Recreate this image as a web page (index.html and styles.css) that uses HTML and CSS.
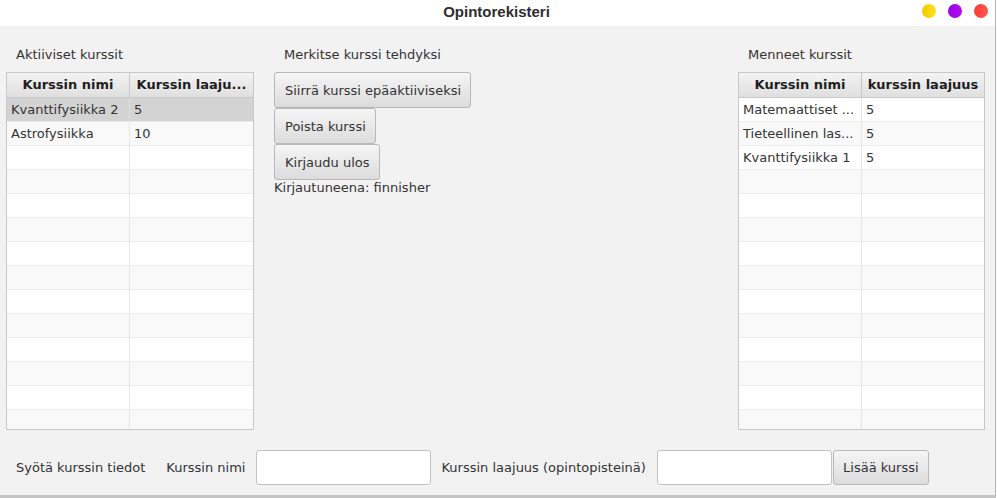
FILE: index.html
```html
<!DOCTYPE html>
<html lang="fi">
<head>
<meta charset="utf-8">
<title>Opintorekisteri</title>
<link rel="stylesheet" href="styles.css">
</head>
<body>
<div class="window">
  <header class="titlebar">
    <span class="title">Opintorekisteri</span>
    <div class="controls">
      <span class="dot dot-min"></span>
      <span class="dot dot-max"></span>
      <span class="dot dot-close"></span>
    </div>
  </header>
  <main class="content">
    <section class="column col-left">
      <div class="label">Aktiiviset kurssit</div>
      <div class="table">
        <div class="thead">
          <div class="th">Kurssin nimi</div>
          <div class="th">Kurssin laaju...</div>
        </div>
        <div class="row selected"><div class="td">Kvanttifysiikka 2</div><div class="td">5</div></div>
        <div class="row"><div class="td">Astrofysiikka</div><div class="td">10</div></div>
        <div class="row"><div class="td"></div><div class="td"></div></div>
        <div class="row"><div class="td"></div><div class="td"></div></div>
        <div class="row"><div class="td"></div><div class="td"></div></div>
        <div class="row"><div class="td"></div><div class="td"></div></div>
        <div class="row"><div class="td"></div><div class="td"></div></div>
        <div class="row"><div class="td"></div><div class="td"></div></div>
        <div class="row"><div class="td"></div><div class="td"></div></div>
        <div class="row"><div class="td"></div><div class="td"></div></div>
        <div class="row"><div class="td"></div><div class="td"></div></div>
        <div class="row"><div class="td"></div><div class="td"></div></div>
        <div class="row"><div class="td"></div><div class="td"></div></div>
        <div class="row"><div class="td"></div><div class="td"></div></div>
      </div>
    </section>
    <section class="column col-middle">
      <div class="label">Merkitse kurssi tehdyksi</div>
      <div class="buttons">
        <button class="btn">Siirrä kurssi epäaktiiviseksi</button>
        <button class="btn">Poista kurssi</button>
        <button class="btn">Kirjaudu ulos</button>
      </div>
      <div class="status">Kirjautuneena: finnisher</div>
    </section>
    <section class="column col-right">
      <div class="label">Menneet kurssit</div>
      <div class="table">
        <div class="thead">
          <div class="th">Kurssin nimi</div>
          <div class="th">kurssin laajuus</div>
        </div>
        <div class="row"><div class="td">Matemaattiset ...</div><div class="td">5</div></div>
        <div class="row"><div class="td">Tieteellinen las...</div><div class="td">5</div></div>
        <div class="row"><div class="td">Kvanttifysiikka 1</div><div class="td">5</div></div>
        <div class="row"><div class="td"></div><div class="td"></div></div>
        <div class="row"><div class="td"></div><div class="td"></div></div>
        <div class="row"><div class="td"></div><div class="td"></div></div>
        <div class="row"><div class="td"></div><div class="td"></div></div>
        <div class="row"><div class="td"></div><div class="td"></div></div>
        <div class="row"><div class="td"></div><div class="td"></div></div>
        <div class="row"><div class="td"></div><div class="td"></div></div>
        <div class="row"><div class="td"></div><div class="td"></div></div>
        <div class="row"><div class="td"></div><div class="td"></div></div>
        <div class="row"><div class="td"></div><div class="td"></div></div>
        <div class="row"><div class="td"></div><div class="td"></div></div>
      </div>
    </section>
    <footer class="form-row">
      <span class="form-title">Syötä kurssin tiedot</span>
      <span class="form-label">Kurssin nimi</span>
      <input class="field" type="text">
      <span class="form-label">Kurssin laajuus (opintopisteinä)</span>
      <input class="field field-joined" type="text">
      <button class="btn btn-add">Lisää kurssi</button>
    </footer>
  </main>
</div>
</body>
</html>
```

FILE: styles.css
```css
* { box-sizing: border-box; }

html, body {
  margin: 0;
  padding: 0;
  background: #ffffff;
}

body {
  width: 997px;
  height: 498px;
  overflow: hidden;
  font-family: "DejaVu Sans", "Noto Sans", sans-serif;
  font-size: 13px;
  color: #333333;
}

.window {
  width: 996px;
  height: 498px;
  border-right: 1px solid #b4b4b4;
  border-bottom: 3px solid #c4c4c4;
  display: flex;
  flex-direction: column;
}

.titlebar {
  height: 26px;
  flex: none;
  background: #ffffff;
  display: flex;
  align-items: center;
  justify-content: center;
  position: relative;
}

.title {
  font-family: "Liberation Sans", "DejaVu Sans", sans-serif;
  font-weight: bold;
  font-size: 15px;
  color: #2e2e2e;
  margin-top: -3px;
  margin-left: -2px;
}

.controls {
  position: absolute;
  right: 7px;
  top: 4px;
  display: flex;
  gap: 12px;
}

.dot {
  width: 14px;
  height: 14px;
  border-radius: 50%;
  display: block;
}
.dot-min { background: linear-gradient(90deg, #f3c800, #ffe21a); }
.dot-max { background: linear-gradient(90deg, #9a00e6, #b010f0); }
.dot-close { background: linear-gradient(90deg, #ff3c3c, #ff5a4a); }

.content {
  flex: 1;
  background: #f2f2f2;
  display: grid;
  grid-template-columns: 248px 444px 247px;
  grid-template-rows: 386px 1fr;
  column-gap: 20px;
  padding: 18px 0 0 6px;
}

.column {
  display: flex;
  flex-direction: column;
}

.label {
  height: 20px;
  line-height: 21px;
  padding-left: 10px;
  margin-bottom: 8px;
  color: #333333;
}

.table {
  height: 358px;
  border: 1px solid #c8c8c8;
  background: #ffffff;
  overflow: hidden;
}

.thead {
  display: grid;
  grid-template-columns: 123px 1fr;
  height: 25px;
  background: linear-gradient(#f3f3f3, #dfdfdf);
  border-bottom: 1px solid #c8c8c8;
}

.th {
  font-weight: bold;
  color: #1e1e1e;
  text-align: center;
  line-height: 24px;
  white-space: nowrap;
  overflow: hidden;
}

.th:first-child { border-right: 1px solid #c8c8c8; }

.row {
  display: grid;
  grid-template-columns: 123px 1fr;
  height: 24px;
  border-bottom: 1px solid #ececec;
  background: #ffffff;
}

.row:nth-child(odd) { background: #f9f9f9; }
.row.selected { background: #d3d3d3; }

.td {
  line-height: 24px;
  padding-left: 4px;
  white-space: nowrap;
  overflow: hidden;
  color: #333333;
}

.td:first-child { border-right: 1px solid #e6e6e6; }
.row.selected .td:first-child { border-right-color: #dedede; }

.buttons {
  display: flex;
  flex-direction: column;
  align-items: flex-start;
}

.btn {
  font-family: "DejaVu Sans", "Noto Sans", sans-serif;
  font-size: 13px;
  color: #333333;
  height: 36px;
  padding: 0 9px 0 10px;
  border: 1px solid #b8b8b8;
  border-radius: 3px;
  background: linear-gradient(#f5f5f5, #dcdcdc);
  margin: 0;
}

.status {
  line-height: 16px;
  color: #333333;
}

.form-row {
  grid-column: 1 / -1;
  display: flex;
  align-items: center;
  margin-top: 20px;
  height: 35px;
  padding-left: 10px;
}

.form-title { margin-right: 21px; }

.form-label { margin-right: 11px; }

.field {
  width: 175px;
  height: 35px;
  border: 1px solid #c2c2c2;
  border-radius: 3px;
  background: #ffffff;
  margin: 0 10px 0 0;
  padding: 0 6px;
  font-family: inherit;
  font-size: 13px;
}

.field-joined { margin-right: 1px; }

.btn-add {
  height: 35px;
  width: 96px;
  padding: 0;
}
```
